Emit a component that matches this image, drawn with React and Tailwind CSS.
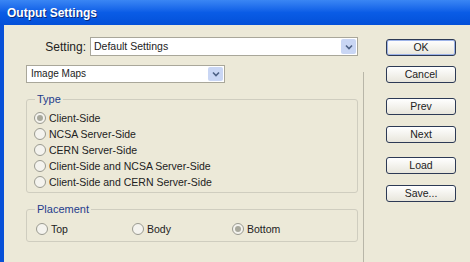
import React from "react";

const font = { fontFamily: '"Liberation Sans", Arial, sans-serif' };

function Chevron() {
  return (
    <div className="flex h-full w-[15px] items-center justify-center rounded-[2px] bg-[#c9d6f4]">
      <svg width="8" height="6" viewBox="0 0 8 6">
        <path d="M1 1.5 L4 4.5 L7 1.5" stroke="#4d6185" strokeWidth="1.6" fill="none" />
      </svg>
    </div>
  );
}

function Radio({ checked, label, className = "" }) {
  return (
    <div className={"flex items-center " + className}>
      <div className="flex h-[12px] w-[12px] items-center justify-center rounded-full border border-[#9a9a90] bg-[#f4f3ee]">
        {checked && <div className="h-[6px] w-[6px] rounded-full bg-[#a8a89c]" />}
      </div>
      <span className="ml-[3px] text-[10.5px] leading-none text-[#222]">{label}</span>
    </div>
  );
}

function Btn({ children, className = "", focus }) {
  return (
    <div
      className={
        "flex h-[17px] w-[70px] items-center justify-center rounded-[3px] border border-[#2d3a55] bg-gradient-to-b from-[#ffffff] to-[#e8e6dc] text-[10.5px] leading-none text-[#222] " +
        (focus ? "shadow-[inset_0_0_0_1px_#9db3e8] " : "") +
        className
      }
    >
      {children}
    </div>
  );
}

export default function App() {
  return (
    <div style={font} className="flex h-[262px] w-[470px] flex-col overflow-hidden bg-[#ece9d8]">
      <div className="flex h-[25px] items-center bg-gradient-to-b from-[#3a86f4] via-[#0a5ce6] to-[#0450d8] pl-[7px]">
        <span className="text-[12px] font-bold text-white [text-shadow:1px_1px_0_#0a2a7a]">Output Settings</span>
      </div>
      <div className="flex flex-1">
        <div className="w-[4px] bg-[#0750d8]" />
        <div className="flex w-[359px] flex-col pl-[22px] pr-[5px]">
          <div className="mt-[12px] flex h-[19px] items-center">
            <span className="w-[60px] text-right text-[12px] leading-none text-[#222]">Setting:</span>
            <div className="ml-[4px] flex h-[19px] flex-1 items-center border border-[#a9a79a] bg-white pl-[3px] pr-[1px]">
              <span className="flex-1 text-[10.5px] leading-none text-[#222]">Default Settings</span>
              <div className="h-[15px]"><Chevron /></div>
            </div>
          </div>
          <div className="mt-[9px] flex h-[18px] w-[199px] items-center border border-[#a9a79a] bg-white pl-[4px] pr-[1px]">
            <span className="flex-1 text-[10px] leading-none text-[#222]">Image Maps</span>
            <div className="h-[14px]"><Chevron /></div>
          </div>
          <div className="relative mt-[16px] h-[94px] rounded-[3px] border border-[#cfcdbf]">
            <span className="absolute left-[8px] top-[-8px] bg-[#ece9d8] px-[2px] text-[11px] leading-[14px] text-[#1f3c8c]">Type</span>
            <div className="flex flex-col gap-[4px] pl-[7px] pt-[12px]">
              <Radio checked label="Client-Side" />
              <Radio label="NCSA Server-Side" />
              <Radio label="CERN Server-Side" />
              <Radio label="Client-Side and NCSA Server-Side" />
              <Radio label="Client-Side and CERN Server-Side" />
            </div>
          </div>
          <div className="relative mt-[16px] h-[33px] rounded-[3px] border border-[#cfcdbf]">
            <span className="absolute left-[8px] top-[-8px] bg-[#ece9d8] px-[2px] text-[11px] leading-[14px] text-[#1f3c8c]">Placement</span>
            <div className="flex pl-[9px] pt-[13px]">
              <Radio label="Top" className="w-[96px]" />
              <Radio label="Body" className="w-[100px]" />
              <Radio checked label="Bottom" />
            </div>
          </div>
        </div>
        <div className="mt-[47px] w-px bg-[#b8b6a8]" />
        <div className="flex flex-col pl-[22px]">
          <Btn focus className="mt-[14px]">OK</Btn>
          <Btn className="mt-[10px]">Cancel</Btn>
          <Btn className="mt-[15px]">Prev</Btn>
          <Btn className="mt-[11px]">Next</Btn>
          <Btn className="mt-[14px]">Load</Btn>
          <Btn className="mt-[11px]">Save...</Btn>
        </div>
      </div>
    </div>
  );
}
